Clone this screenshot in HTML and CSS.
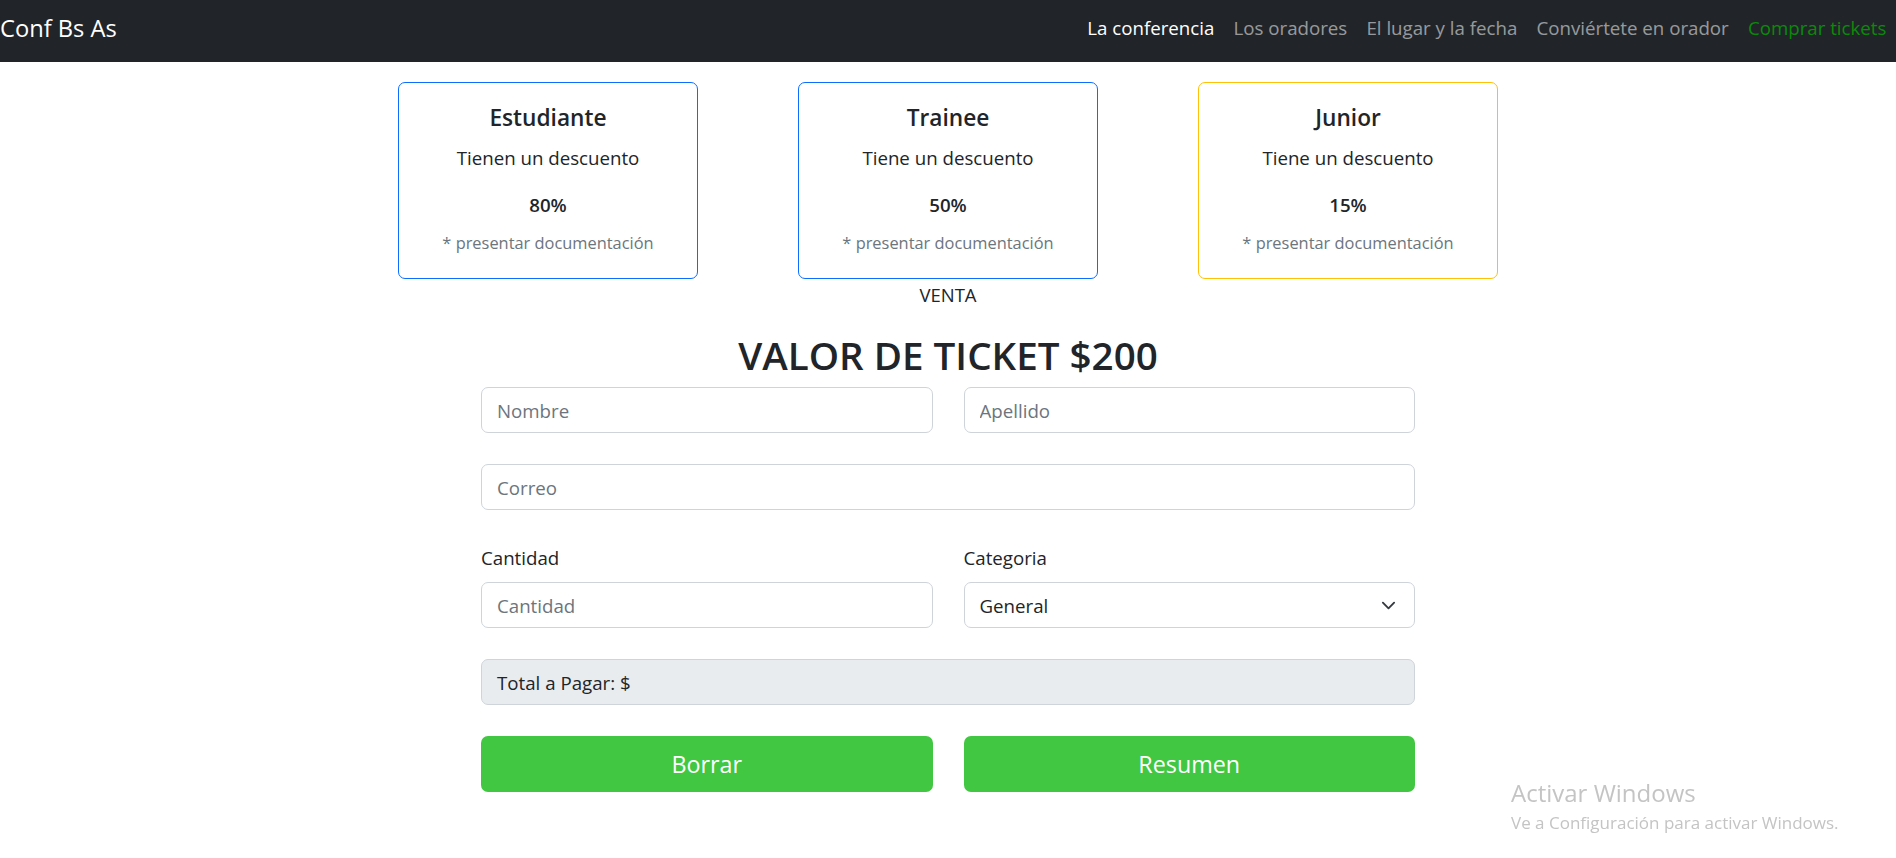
FILE: index.html
```html
<!DOCTYPE html>
<html lang="es">
<head>
<meta charset="utf-8">
<title>Conf Bs As - Comprar tickets</title>
<link rel="stylesheet" href="styles.css">
</head>
<body>
<nav class="navbar">
  <a class="brand" href="#">Conf Bs As</a>
  <ul class="nav-links">
    <li><a class="nav-link active" href="#">La conferencia</a></li>
    <li><a class="nav-link" href="#">Los oradores</a></li>
    <li><a class="nav-link" href="#">El lugar y la fecha</a></li>
    <li><a class="nav-link" href="#">Conviértete en orador</a></li>
    <li><a class="nav-link buy" href="#">Comprar tickets</a></li>
  </ul>
</nav>

<main class="main">
  <section class="cards">
    <div class="card card-blue">
      <h5 class="card-title">Estudiante</h5>
      <p class="card-text">Tienen un descuento</p>
      <p class="card-pct">80%</p>
      <p class="card-note">* presentar documentación</p>
    </div>
    <div class="card card-blue">
      <h5 class="card-title">Trainee</h5>
      <p class="card-text">Tiene un descuento</p>
      <p class="card-pct">50%</p>
      <p class="card-note">* presentar documentación</p>
    </div>
    <div class="card card-yellow">
      <h5 class="card-title">Junior</h5>
      <p class="card-text">Tiene un descuento</p>
      <p class="card-pct">15%</p>
      <p class="card-note">* presentar documentación</p>
    </div>
  </section>

  <p class="venta">VENTA</p>
  <h2 class="ticket-title">VALOR DE TICKET $200</h2>

  <form class="form">
    <div class="row row-2">
      <input class="field" type="text" placeholder="Nombre">
      <input class="field" type="text" placeholder="Apellido">
    </div>
    <div class="row">
      <input class="field" type="email" placeholder="Correo">
    </div>
    <div class="row row-2 row-labels">
      <div class="group">
        <label class="label">Cantidad</label>
        <input class="field" type="text" placeholder="Cantidad">
      </div>
      <div class="group">
        <label class="label">Categoria</label>
        <div class="select">
          <span>General</span>
          <svg class="chev" width="16" height="16" viewBox="0 0 16 16"><path d="M2 5l6 6 6-6" fill="none" stroke="#343a40" stroke-width="2" stroke-linecap="round" stroke-linejoin="round"/></svg>
        </div>
      </div>
    </div>
    <div class="row">
      <div class="total">Total a Pagar: $</div>
    </div>
    <div class="row row-2">
      <button type="button" class="btn">Borrar</button>
      <button type="button" class="btn">Resumen</button>
    </div>
  </form>
</main>

<div class="activate">
  <div class="activate-title">Activar Windows</div>
  <div class="activate-sub">Ve a Configuración para activar Windows.</div>
</div>
</body>
</html>
```

FILE: styles.css
```css
* { box-sizing: border-box; }
html, body { margin: 0; padding: 0; }
body {
  font-family: "Open Sans", "Noto Sans", sans-serif;
  font-size: 18.7px;
  color: #212529;
  background: #fff;
  width: 1896px;
  height: 858px;
  overflow: hidden;
}
a { text-decoration: none; }

.navbar {
  height: 62px;
  background: #212529;
  display: flex;
  align-items: center;
  justify-content: space-between;
}
.brand {
  color: #fff;
  font-size: 23.7px;
  line-height: 30px;
  padding-left: 0;
  margin-top: -6px;
}
.nav-links {
  list-style: none;
  display: flex;
  margin: 0;
  padding: 0;
  margin-top: -6px;
}
.nav-link {
  display: block;
  padding: 0 9.6px;
  line-height: 30px;
  font-size: 18.7px;
  color: rgba(255,255,255,.55);
}
.nav-link.active { color: #fff; }
.nav-link.buy { color: #0a8a0a; }

.main { display: flex; flex-direction: column; align-items: center; }

.cards {
  display: flex;
  gap: 100px;
  margin-top: 20px;
}
.card {
  width: 300px;
  height: 197px;
  border: 1px solid #0d6efd;
  border-radius: 7px;
  padding: 20px 6px 19px;
  text-align: center;
}
.card-yellow { border-color: #ffc107; }
.card p, .card h5 { margin: 0; }
.card-title {
  font-size: 22.7px;
  font-weight: 600;
  line-height: 30px;
  margin-bottom: 10px !important;
}
.card-text { line-height: 30px; margin-bottom: 17px !important; }
.card-pct { line-height: 30px; font-weight: 600; margin-bottom: 8px !important; }
.card-note { line-height: 30px; color: #6c757d; font-size: 16.4px; }

.venta {
  margin: 1px 0 0;
  line-height: 29px;
  font-size: 18.5px;
}
.ticket-title {
  margin: 23px 0 0;
  font-size: 38.6px;
  font-weight: 600;
  line-height: 46px;
}

.form {
  width: 934px;
  margin-top: 9px;
  display: flex;
  flex-direction: column;
  gap: 31px;
}
.row { display: flex; }
.row-2 { display: grid; grid-template-columns: 1fr 1fr; column-gap: 31px; }
.row-labels { margin-top: 2px; }
.group { display: flex; flex-direction: column; }
.label { line-height: 29px; margin-bottom: 10px; }

.field, .select, .total {
  width: 100%;
  height: 46px;
  border: 1px solid #ced4da;
  border-radius: 7px;
  padding: 0 15px;
  font-family: inherit;
  font-size: 18.7px;
  color: #212529;
  background: #fff;
  outline: none;
}
.field::placeholder { color: #6c757d; }
.select {
  display: flex;
  align-items: center;
  justify-content: space-between;
  padding-right: 18px;
}
.chev { width: 15px; height: 15px; }
.total {
  display: flex;
  align-items: center;
  background: #e9ecef;
}

.btn {
  height: 56px;
  border: none;
  border-radius: 7px;
  background: #41c741;
  color: #fff;
  font-family: inherit;
  font-size: 23.3px;
  cursor: pointer;
}

.activate {
  position: fixed;
  left: 1511px;
  top: 778px;
  color: #c4c4c4;
}
.activate-title { font-size: 24px; line-height: 30px; }
.activate-sub { font-size: 17px; line-height: 22px; margin-top: 4px; }
```
